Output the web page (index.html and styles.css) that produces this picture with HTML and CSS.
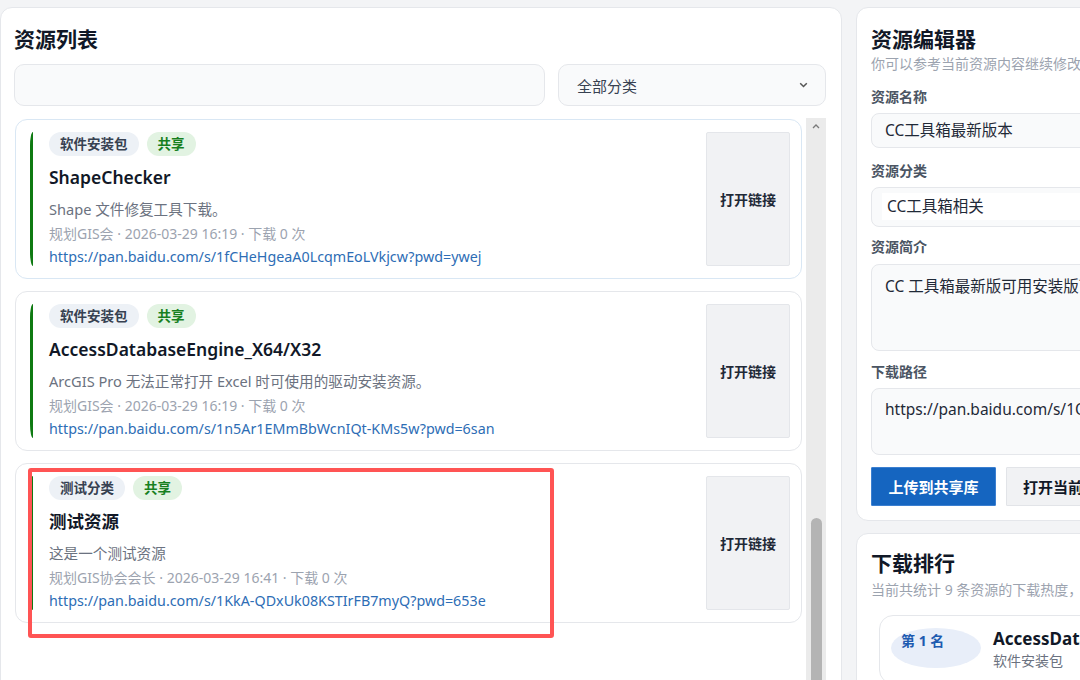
FILE: index.html
```html
<!DOCTYPE html>
<html lang="zh-CN">
<head>
<meta charset="utf-8">
<title>资源列表</title>
<link rel="stylesheet" href="styles.css">
</head>
<body>
<div class="app">
  <section class="panel list-panel">
    <h2 class="panel-title">资源列表</h2>
    <div class="filters">
      <div class="field search"></div>
      <div class="field select">
        <span>全部分类</span>
        <svg class="chev" width="9" height="6" viewBox="0 0 9 6"><path d="M1.2 1.2 L4.5 4.5 L7.8 1.2" fill="none" stroke="#555" stroke-width="1.5"/></svg>
      </div>
    </div>
    <div class="list-wrap">
      <div class="list">
        <article class="card card-active">
          <div class="card-body">
            <div class="tags"><span class="tag tag-cat">软件安装包</span><span class="tag tag-share">共享</span></div>
            <h3 class="card-title">ShapeChecker</h3>
            <p class="card-desc">Shape 文件修复工具下载。</p>
            <p class="card-meta">规划GIS会 · 2026-03-29 16:19 · 下载 0 次</p>
            <a class="card-link">https://pan.baidu.com/s/1fCHeHgeaA0LcqmEoLVkjcw?pwd=ywej</a>
          </div>
          <button class="open-btn">打开链接</button>
        </article>
        <article class="card">
          <div class="card-body">
            <div class="tags"><span class="tag tag-cat">软件安装包</span><span class="tag tag-share">共享</span></div>
            <h3 class="card-title">AccessDatabaseEngine_X64/X32</h3>
            <p class="card-desc">ArcGIS Pro 无法正常打开 Excel 时可使用的驱动安装资源。</p>
            <p class="card-meta">规划GIS会 · 2026-03-29 16:19 · 下载 0 次</p>
            <a class="card-link">https://pan.baidu.com/s/1n5Ar1EMmBbWcnIQt-KMs5w?pwd=6san</a>
          </div>
          <button class="open-btn">打开链接</button>
        </article>
        <article class="card">
          <div class="card-body">
            <div class="tags"><span class="tag tag-cat">测试分类</span><span class="tag tag-share">共享</span></div>
            <h3 class="card-title">测试资源</h3>
            <p class="card-desc">这是一个测试资源</p>
            <p class="card-meta">规划GIS协会会长 · 2026-03-29 16:41 · 下载 0 次</p>
            <a class="card-link">https://pan.baidu.com/s/1KkA-QDxUk08KSTIrFB7myQ?pwd=653e</a>
          </div>
          <button class="open-btn">打开链接</button>
        </article>
      </div>
      <div class="scrollbar">
        <div class="sb-arrow"><svg width="8" height="5" viewBox="0 0 8 5"><path d="M1 4 L4 1 L7 4" fill="none" stroke="#7a7a7a" stroke-width="1.3"/></svg></div>
        <div class="sb-thumb"></div>
      </div>
    </div>
  </section>

  <aside class="side">
    <section class="panel editor">
      <h2 class="panel-title">资源编辑器</h2>
      <p class="panel-sub">你可以参考当前资源内容继续修改后重新上传到共享库。</p>
      <label class="form-label l-name">资源名称</label>
      <div class="field input-box">CC工具箱最新版本</div>
      <label class="form-label l-cat">资源分类</label>
      <div class="field select-box"><span class="select-inner">CC工具箱相关</span></div>
      <label class="form-label l-desc">资源简介</label>
      <div class="field textarea t-desc">CC 工具箱最新版可用安装版下载。</div>
      <label class="form-label l-url">下载路径</label>
      <div class="field textarea t-url">https://pan.baidu.com/s/1OJ8kTq2mVbXwR?pwd=cc01</div>
      <div class="actions">
        <button class="btn btn-primary">上传到共享库</button>
        <button class="btn btn-plain">打开当前链接</button>
      </div>
    </section>
    <section class="panel rank">
      <h2 class="panel-title">下载排行</h2>
      <p class="panel-sub">当前共统计 9 条资源的下载热度，按下载次数排序。</p>
      <div class="rank-item">
        <span class="rank-badge">第 1 名</span>
        <div class="rank-info">
          <div class="rank-name">AccessDatabaseEngine_X64/X32</div>
          <div class="rank-cat">软件安装包</div>
        </div>
      </div>
    </section>
  </aside>
</div>
<div class="annotation"></div>
</body>
</html>
```

FILE: styles.css
```css
* { box-sizing: border-box; }
html, body { margin: 0; padding: 0; }
body {
  width: 1080px;
  height: 680px;
  overflow: hidden;
  position: relative;
  background: #f3f4f6;
  font-family: "Noto Sans", "Noto Sans CJK SC", sans-serif;
  color: #1f2937;
}
.app {
  display: flex;
  gap: 14px;
  padding-top: 7px;
}
.panel {
  background: #fff;
  border: 1px solid #e5e7eb;
  border-radius: 12px;
}
.panel-title {
  margin: 0;
  font-size: 21px;
  line-height: 28px;
  font-weight: 700;
  color: #111827;
}
.panel-sub {
  margin: 1px 0 0;
  font-size: 14px;
  line-height: 20px;
  color: #9ca3af;
  white-space: nowrap;
}

/* left list panel */
.list-panel {
  width: 842px;
  flex-shrink: 0;
  height: 720px;
  padding: 17px 15px 0 13px;
}
.filters {
  margin-top: 11px;
  display: grid;
  grid-template-columns: 1fr 268px;
  gap: 13px;
}
.field {
  background: #f9fafb;
  border: 1px solid #e5e7eb;
  border-radius: 10px;
}
.search, .select { height: 42px; }
.select {
  display: flex;
  align-items: center;
  justify-content: space-between;
  padding: 0 17px 0 18px;
  font-size: 15px;
  color: #374151;
}
.list-wrap {
  margin-top: 12px;
  display: flex;
  height: 620px;
}
.list {
  flex: 1;
  padding: 1px 4px 0 1px;
  display: flex;
  flex-direction: column;
  gap: 12px;
  overflow: hidden;
}
.card {
  display: flex;
  gap: 12px;
  border: 1px solid #e5e7eb;
  border-radius: 12px;
  padding: 12px 11px 12px 14px;
  background: #fff;
}
.card-active { border-color: #d9e7f4; }
.card-body {
  flex: 1;
  border-left: 3px solid #0e7a12;
  border-radius: 3px / 14px;
  padding-left: 16px;
  min-width: 0;
}
.tags { display: flex; gap: 8px; }
.tag {
  height: 24px;
  line-height: 24px;
  padding: 0 11px;
  border-radius: 12px;
  font-size: 13.5px;
  font-weight: 700;
}
.tag-cat { background: #edf1f6; color: #374151; }
.tag-share { background: #e2f3e2; color: #17801f; }
.card-title {
  margin: 8px 0 0;
  font-size: 17.5px;
  line-height: 26px;
  font-weight: 600;
  color: #111827;
}
.card-desc {
  margin: 8px 0 0;
  font-size: 14.6px;
  line-height: 22px;
  color: #6b7280;
}
.card-meta {
  margin: 4px 0 0;
  font-size: 14px;
  line-height: 20px;
  color: #9ca3af;
}
.card-link {
  display: block;
  margin-top: 3px;
  font-size: 14.3px;
  line-height: 19px;
  color: #2d6db5;
  white-space: nowrap;
}
.open-btn {
  width: 84px;
  flex-shrink: 0;
  background: #f1f2f4;
  border: 1px solid #e4e6ea;
  border-radius: 2px;
  font-family: inherit;
  font-size: 14px;
  font-weight: 700;
  color: #1f2937;
  padding: 0;
}
.scrollbar {
  width: 20px;
  flex-shrink: 0;
  background: #ebebeb;
  display: flex;
  flex-direction: column;
  align-items: center;
}
.sb-arrow {
  height: 20px;
  display: flex;
  align-items: center;
  justify-content: center;
}
.sb-thumb {
  margin-top: 383px;
  width: 11px;
  height: 260px;
  border-radius: 6px;
  background: #b4b4b4;
}

/* right side */
.side {
  width: 330px;
  flex-shrink: 0;
  display: flex;
  flex-direction: column;
  gap: 12px;
}
.editor { padding: 17px 0 14px 14px; }
.form-label {
  display: block;
  font-size: 14px;
  line-height: 20px;
  font-weight: 600;
  color: #4b5563;
}
.l-name { margin-top: 13px; }
.l-cat { margin-top: 13px; }
.l-desc { margin-top: 10px; }
.l-url { margin-top: 11px; }
.editor .field {
  margin-top: 6px;
  border-radius: 8px;
  font-size: 15.5px;
  color: #1f2937;
  white-space: nowrap;
  overflow: hidden;
}
.input-box {
  height: 35px;
  line-height: 33px;
  padding-left: 13px;
}
.select-box {
  height: 40px;
  padding: 5px 0 6px 10px;
}
.select-inner {
  display: block;
  height: 27px;
  line-height: 27px;
  background: #fff;
  padding-left: 5px;
}
.textarea {
  padding: 10px 0 0 13px;
  line-height: 22px;
}
.t-desc { height: 87px; margin-top: 7px !important; }
.t-url { height: 67px; padding-top: 9px; }
.actions {
  margin-top: 12px;
  display: flex;
  gap: 10px;
}
.btn {
  height: 39px;
  padding: 0 16px;
  font-family: inherit;
  font-size: 15px;
  font-weight: 700;
  white-space: nowrap;
  border-radius: 1px;
}
.btn-primary {
  width: 125px;
  background: #1565c0;
  border: 1px solid #3b7fd0;
  color: #fff;
}
.btn-plain {
  background: #f1f2f4;
  border: 1px solid #e2e4e8;
  color: #111827;
}
.rank {
  padding: 15px 0 20px 14px;
  height: 200px;
}
.rank .panel-sub { margin-top: 3px; }
.rank-item {
  margin: 15px 0 0 8px;
  border: 1px solid #e5e7eb;
  border-radius: 14px;
  padding: 12px 11px;
  display: flex;
  gap: 12px;
  white-space: nowrap;
}
.rank-badge {
  width: 90px;
  height: 40px;
  flex-shrink: 0;
  border-radius: 50%;
  background: #e8eef9;
  color: #1e5bb0;
  font-size: 14px;
  font-weight: 700;
  line-height: 26px;
  padding-left: 10px;
}
.rank-name {
  font-size: 17px;
  font-weight: 700;
  line-height: 22px;
  color: #111827;
}
.rank-cat {
  margin-top: 1px;
  font-size: 14px;
  line-height: 20px;
  color: #6b7280;
}

/* screenshot annotation overlay */
.annotation {
  position: absolute;
  left: 28px;
  top: 468px;
  width: 526px;
  height: 170px;
  border: 4px solid #ff5454;
  border-radius: 3px;
}
```
